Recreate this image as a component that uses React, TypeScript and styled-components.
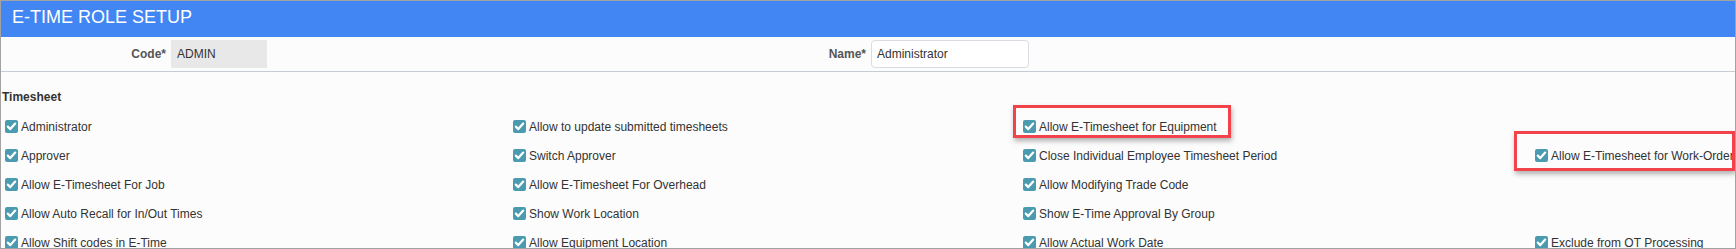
import { createGlobalStyle, styled } from "styled-components";

const GlobalStyle = createGlobalStyle`
  html, body {
    margin: 0;
    padding: 0;
    background: #ffffff;
  }
  * {
    box-sizing: border-box;
  }
`;

type Option = { label: string; checked?: boolean } | null;

// rows of the timesheet grid, four columns each (null = empty cell)
const rows: Option[][] = [
  [
    { label: "Administrator" },
    { label: "Allow to update submitted timesheets" },
    { label: "Allow E-Timesheet for Equipment" },
    null,
  ],
  [
    { label: "Approver" },
    { label: "Switch Approver" },
    { label: "Close Individual Employee Timesheet Period" },
    { label: "Allow E-Timesheet for Work-Order" },
  ],
  [
    { label: "Allow E-Timesheet For Job" },
    { label: "Allow E-Timesheet For Overhead" },
    { label: "Allow Modifying Trade Code" },
    null,
  ],
  [
    { label: "Allow Auto Recall for In/Out Times" },
    { label: "Show Work Location" },
    { label: "Show E-Time Approval By Group" },
    null,
  ],
  [
    { label: "Allow Shift codes in E-Time" },
    { label: "Allow Equipment Location" },
    { label: "Allow Actual Work Date" },
    { label: "Exclude from OT Processing" },
  ],
];

const CheckIcon = () => (
  <svg width="13" height="13" viewBox="0 0 13 13">
    <path
      d="M2.8 6.6 L5.3 9.1 L10.2 3.6"
      fill="none"
      stroke="#ffffff"
      strokeWidth="2.2"
      strokeLinecap="round"
      strokeLinejoin="round"
    />
  </svg>
);

export default function App() {
  return (
    <>
      <GlobalStyle />
      <Frame>
        <Header>E-TIME ROLE SETUP</Header>
        <FormRow>
          <Field>
            <FieldLabel>Code*</FieldLabel>
            <CodeInput readOnly value="ADMIN" />
          </Field>
          <Field>
            <FieldLabel>Name*</FieldLabel>
            <NameInput readOnly value="Administrator" />
          </Field>
        </FormRow>
        <Section>
          <SectionTitle>Timesheet</SectionTitle>
          <OptionGrid>
            {rows.flat().map((opt, i) =>
              opt ? (
                <OptionItem key={i}>
                  <CheckBox>
                    <CheckIcon />
                  </CheckBox>
                  <OptionText>{opt.label}</OptionText>
                </OptionItem>
              ) : (
                <OptionItem key={i} />
              )
            )}
          </OptionGrid>
        </Section>
        <Highlight $left={1012} $top={104} $width={218} $height={33} />
        <Highlight $left={1513} $top={130} $width={221} $height={40} />
      </Frame>
    </>
  );
}

const Frame = styled.div`
  position: relative;
  width: 1736px;
  height: 249px;
  border: 1px solid #a3a3a3;
  background-color: #fcfcfc;
  overflow: hidden;
  font-family: "Liberation Sans", Arial, sans-serif;
  color: #333;
`;

const Header = styled.div`
  height: 36px;
  padding: 0 0 4px 11px;
  line-height: 32px;
  font-size: 18px;
  color: #ffffff;
  background-color: #4286f4;
`;

const FormRow = styled.div`
  display: grid;
  grid-template-columns: 700px 700px;
  align-items: center;
  height: 35px;
  border-bottom: 1px solid #c6ccd4;
`;

const Field = styled.div`
  display: flex;
  align-items: center;
  gap: 5px;
`;

const FieldLabel = styled.label`
  width: 165px;
  text-align: right;
  font-size: 12px;
  font-weight: bold;
  color: #555;
`;

const BaseInput = styled.input`
  height: 28px;
  font-family: "Liberation Sans", Arial, sans-serif;
  font-size: 12px;
  color: #333;
  outline: none;
`;

const CodeInput = styled(BaseInput)`
  width: 96px;
  padding: 0 6px;
  border: none;
  background-color: #e8e8e8;
`;

const NameInput = styled(BaseInput)`
  width: 158px;
  padding: 0 5px;
  border: 1px solid #d9dde3;
  border-radius: 4px;
  background-color: #ffffff;
`;

const Section = styled.div`
  padding-top: 17px;
`;

const SectionTitle = styled.div`
  padding-left: 1px;
  line-height: 16px;
  font-size: 12px;
  font-weight: bold;
  color: #333;
`;

const OptionGrid = styled.div`
  display: grid;
  grid-template-columns: 508px 510px 512px 510px;
  grid-auto-rows: 29px;
  margin-top: 7px;
  padding-left: 4px;
`;

const OptionItem = styled.div`
  display: flex;
  align-items: center;
  gap: 3px;
  white-space: nowrap;
`;

const CheckBox = styled.span`
  display: inline-flex;
  flex-shrink: 0;
  width: 13px;
  height: 13px;
  border-radius: 2px;
  background-color: #4a9bb0;
`;

const OptionText = styled.span`
  font-size: 12px;
  color: #333;
`;

const Highlight = styled.div<{
  $left: number;
  $top: number;
  $width: number;
  $height: number;
}>`
  position: absolute;
  left: ${(p) => p.$left}px;
  top: ${(p) => p.$top}px;
  width: ${(p) => p.$width}px;
  height: ${(p) => p.$height}px;
  border: 3px solid #f2434a;
  box-shadow: 1px 3px 5px rgba(0, 0, 0, 0.3);
  pointer-events: none;
`;
